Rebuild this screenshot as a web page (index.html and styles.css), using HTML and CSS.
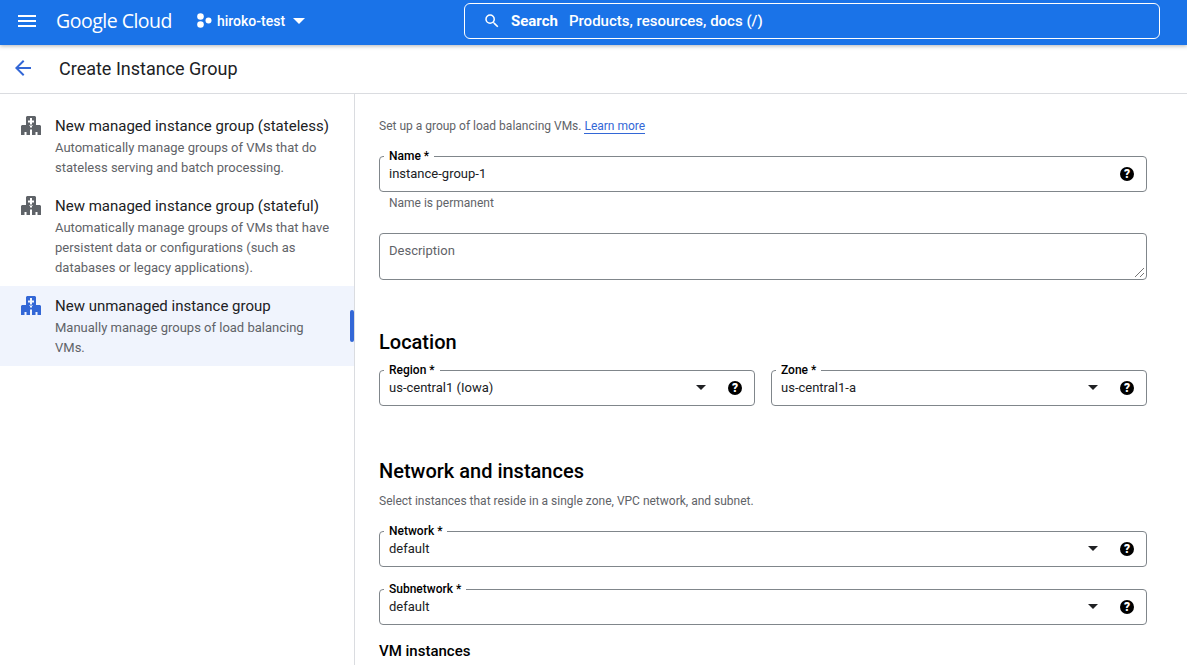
FILE: index.html
```html
<!DOCTYPE html>
<html lang="en">
<head>
    <meta charset="UTF-8">
    <title>Create Instance Group</title>
    <link rel="stylesheet" href="styles.css">
</head>
<body>
    <header class="topbar">
        <svg class="menu-icon" width="18" height="12" viewBox="0 0 18 12"><path d="M0 0h18v2H0zM0 5h18v2H0zM0 10h18v2H0z" fill="#fff"/></svg>
        <span class="logo">Google Cloud</span>
        <div class="project">
            <svg width="15" height="15" viewBox="0 0 15 15" fill="#fff"><circle cx="3.5" cy="3.5" r="3.3"/><circle cx="3.5" cy="11.5" r="3.3"/><circle cx="11.5" cy="7.5" r="3"/></svg>
            <span class="project-name">hiroko-test</span>
            <svg width="12" height="6" viewBox="0 0 12 6"><path d="M0 0h12L6 6z" fill="#fff"/></svg>
        </div>
        <div class="search">
            <svg width="18" height="18" viewBox="0 0 24 24"><path d="M15.5 14h-.79l-.28-.27A6.47 6.47 0 0 0 16 9.5 6.5 6.5 0 1 0 9.5 16c1.61 0 3.09-.59 4.23-1.57l.27.28v.79l5 4.99L20.49 19l-4.99-5zm-6 0C7.01 14 5 11.99 5 9.5S7.01 5 9.5 5 14 7.01 14 9.5 11.99 14 9.5 14z" fill="#fff"/></svg>
            <b class="search-label">Search</b>
            <span>Products, resources, docs (/)</span>
        </div>
    </header>

    <div class="titlebar">
        <svg width="16" height="16" viewBox="0 0 16 16"><path d="M16 7H3.8l5.6-5.6L8 0 0 8l8 8 1.4-1.4L3.8 9H16z" fill="#3367d6"/></svg>
        <h1>Create Instance Group</h1>
    </div>

    <div class="layout">
        <nav class="sidebar">
            <div class="item">
                <svg class="item-icon" width="20" height="20" viewBox="0 0 20 20"><path fill-rule="evenodd" d="M5 1l1-1h8l1 1v8h-4v0.5h-2V9H5zM9 2v2.500H7v2h2v2h2v-2h2v-2h-2V2zM0 10l1-1h7l1 1v1.500h2V10l1-1h7l1 1v9h-3.500v-3h-2v3H11v-5.500H9V19H5.500v-3h-2v3H0z" fill="#5f6368"/></svg>
                <div>
                    <div class="item-title">New managed instance group (stateless)</div>
                    <div class="item-desc">Automatically manage groups of VMs that do stateless serving and batch processing.</div>
                </div>
            </div>
            <div class="item">
                <svg class="item-icon" width="20" height="20" viewBox="0 0 20 20"><path fill-rule="evenodd" d="M5 1l1-1h8l1 1v8h-4v0.5h-2V9H5zM9 2v2.500H7v2h2v2h2v-2h2v-2h-2V2zM0 10l1-1h7l1 1v1.500h2V10l1-1h7l1 1v9h-3.500v-3h-2v3H11v-5.500H9V19H5.500v-3h-2v3H0z" fill="#5f6368"/></svg>
                <div>
                    <div class="item-title">New managed instance group (stateful)</div>
                    <div class="item-desc">Automatically manage groups of VMs that have persistent data or configurations (such as databases or legacy applications).</div>
                </div>
            </div>
            <div class="item active">
                <svg class="item-icon" width="20" height="20" viewBox="0 0 20 20"><path fill-rule="evenodd" d="M5 1l1-1h8l1 1v8h-4v0.5h-2V9H5zM9 2v2.500H7v2h2v2h2v-2h2v-2h-2V2zM0 10l1-1h7l1 1v1.500h2V10l1-1h7l1 1v9h-3.500v-3h-2v3H11v-5.500H9V19H5.500v-3h-2v3H0z" fill="#3367d6"/></svg>
                <div>
                    <div class="item-title">New unmanaged instance group</div>
                    <div class="item-desc">Manually manage groups of load balancing VMs.</div>
                </div>
                <span class="active-bar"></span>
            </div>
        </nav>

        <main class="content">
            <p class="intro">Set up a group of load balancing VMs. <a href="#">Learn more</a></p>

            <fieldset class="field">
                <legend>Name *</legend>
                <span class="value">instance-group-1</span>
                <svg class="help" width="14" height="14" viewBox="0 0 14 14"><circle cx="7" cy="7" r="7"/><text x="7" y="11.200" text-anchor="middle">?</text></svg>
            </fieldset>
            <div class="hint">Name is permanent</div>

            <div class="textarea-field">
                Description
                <svg class="grip" width="9" height="9" viewBox="0 0 9 9"><path d="M0 9 9 0M5 9l4-4" stroke="#767676" stroke-width="1" fill="none"/></svg>
            </div>

            <h2 class="section-location">Location</h2>
            <div class="two-col">
                <fieldset class="field">
                    <legend>Region *</legend>
                    <span class="value">us-central1 (Iowa)</span>
                    <svg class="caret" width="10" height="5" viewBox="0 0 10 5"><path d="M0 0h10L5 5z"/></svg>
                    <svg class="help" width="14" height="14" viewBox="0 0 14 14"><circle cx="7" cy="7" r="7"/><text x="7" y="11.200" text-anchor="middle">?</text></svg>
                </fieldset>
                <fieldset class="field">
                    <legend>Zone *</legend>
                    <span class="value">us-central1-a</span>
                    <svg class="caret" width="10" height="5" viewBox="0 0 10 5"><path d="M0 0h10L5 5z"/></svg>
                    <svg class="help" width="14" height="14" viewBox="0 0 14 14"><circle cx="7" cy="7" r="7"/><text x="7" y="11.200" text-anchor="middle">?</text></svg>
                </fieldset>
            </div>

            <h2 class="section-network">Network and instances</h2>
            <p class="section-note">Select instances that reside in a single zone, VPC network, and subnet.</p>

            <fieldset class="field">
                <legend>Network *</legend>
                <span class="value">default</span>
                <svg class="caret" width="10" height="5" viewBox="0 0 10 5"><path d="M0 0h10L5 5z"/></svg>
                <svg class="help" width="14" height="14" viewBox="0 0 14 14"><circle cx="7" cy="7" r="7"/><text x="7" y="11.200" text-anchor="middle">?</text></svg>
            </fieldset>
            <fieldset class="field subnet">
                <legend>Subnetwork *</legend>
                <span class="value">default</span>
                <svg class="caret" width="10" height="5" viewBox="0 0 10 5"><path d="M0 0h10L5 5z"/></svg>
                <svg class="help" width="14" height="14" viewBox="0 0 14 14"><circle cx="7" cy="7" r="7"/><text x="7" y="11.200" text-anchor="middle">?</text></svg>
            </fieldset>

            <h3>VM instances</h3>
        </main>
    </div>
</body>
</html>
```

FILE: styles.css
```css
html, body {
    height: 665px;
    overflow: hidden;
}

body {
    margin: 0;
    font-family: Roboto, sans-serif;
    color: #202124;
    background-color: #fff;
}

.topbar {
    position: relative;
    z-index: 1;
    display: flex;
    align-items: center;
    height: 45px;
    padding: 0 0 4px 18px;
    background-color: #1a73e8;
    color: #fff;
    box-shadow: 0 1px 4px rgba(60, 64, 67, 0.4);
    box-sizing: border-box;
}

.logo {
    margin-left: 20px;
    width: 141px;
    font-family: "Open Sans", sans-serif;
    font-size: 19.5px;
    letter-spacing: -0.5px;
}

.project {
    display: flex;
    align-items: center;
    width: 267px;
    font-size: 14px;
    font-weight: 500;
}

.project-name {
    margin: 0 8px 0 5px;
}

.search {
    display: flex;
    align-items: center;
    width: 696px;
    height: 36px;
    margin-top: 1px;
    padding-left: 18px;
    border: 1px solid #fff;
    border-radius: 6px;
    font-size: 15px;
    font-weight: 500;
    box-sizing: border-box;
}

.search-label {
    margin: 0 11px 0 10px;
    font-weight: 700;
}

.titlebar {
    display: flex;
    align-items: center;
    height: 49px;
    padding: 0 0 2px 15px;
    border-bottom: 1px solid #dadce0;
    box-sizing: border-box;
}

.titlebar h1 {
    margin: 0 0 0 28px;
    font-size: 18px;
    font-weight: 400;
}

.layout {
    display: flex;
    height: 571px;
}

.sidebar {
    flex: 0 0 355px;
    padding-top: 12px;
    border-right: 1px solid #dadce0;
    box-sizing: border-box;
}

.item {
    position: relative;
    display: flex;
    gap: 14px;
    padding: 10px 24px 8px 21px;
}

.item.active {
    background-color: #f0f4fd;
}

.item-icon {
    flex: none;
}

.item-title {
    font-size: 15px;
    line-height: 20px;
    margin-bottom: 2px;
}

.item-desc {
    font-size: 13px;
    line-height: 20px;
    color: #5f6368;
}

.active-bar {
    position: absolute;
    top: 24px;
    right: 0;
    width: 4px;
    height: 32px;
    border-radius: 2px;
    background-color: #3367d6;
}

.content {
    width: 768px;
    margin-left: 24px;
}

.intro {
    margin: 24px 0 22px;
    font-size: 12px;
    line-height: 16px;
    color: #5f6368;
}

.intro a {
    color: #3367d6;
    text-decoration: none;
    border-bottom: 1px solid #3367d6;
}

.field {
    position: relative;
    display: flex;
    align-items: center;
    height: 43px;
    margin: -7px 0 0;
    padding: 0 9px 0 9px;
    border: 1px solid #80868b;
    border-radius: 4px;
    box-sizing: border-box;
}

.field legend {
    margin-left: -5px;
    padding: 0 5px;
    font-size: 12px;
    line-height: 14px;
    font-weight: 500;
    color: #000;
}

.value {
    flex: 1;
    font-size: 13px;
    line-height: 16px;
    margin-top: -7px;
}

.caret {
    margin: -7px 22px 0 0;
}

.field .caret {
    fill: #202124;
}

.help {
    margin: -7px 3px 0 0;
}

.help circle {
    fill: #000;
}

.help text {
    fill: #fff;
    font-size: 12px;
    font-weight: 900;
    font-family: Roboto, sans-serif;
}

.hint {
    margin: 4px 0 0 10px;
    font-size: 12px;
    line-height: 14px;
    color: #5f6368;
}

.textarea-field {
    position: relative;
    height: 47px;
    margin-top: 23px;
    padding: 9px;
    border: 1px solid #80868b;
    border-radius: 4px;
    font-size: 13px;
    line-height: 16px;
    color: #5f6368;
    box-sizing: border-box;
}

.grip {
    position: absolute;
    right: 2px;
    bottom: 2px;
}

h2 {
    font-size: 20px;
    line-height: 24px;
    font-weight: 500;
    color: #000;
    margin: 0;
}

.section-location {
    margin: 50px 0 16px;
}

.two-col {
    display: grid;
    grid-template-columns: 376px 376px;
    column-gap: 16px;
}

.section-network {
    margin: 53px 0 0;
}

.section-note {
    margin: 10px 0 22px;
    font-size: 12px;
    line-height: 16px;
    color: #5f6368;
}

.subnet {
    margin-top: 15px;
}

h3 {
    margin: 16px 0 0;
    font-size: 15px;
    line-height: 20px;
    font-weight: 500;
    color: #000;
}
```
